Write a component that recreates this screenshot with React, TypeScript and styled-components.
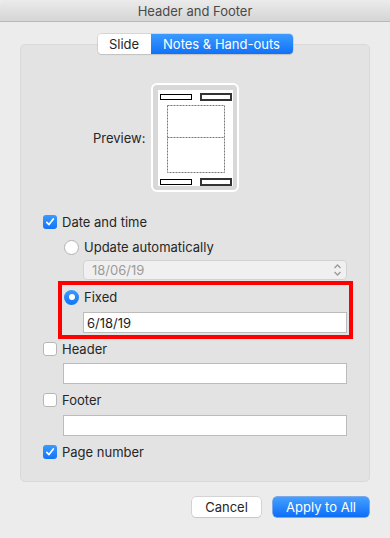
import styled, { createGlobalStyle } from "styled-components";

const GlobalStyle = createGlobalStyle`
    html, body {
        margin: 0;
        padding: 0;
        background: #ececec;
    }
    body {
        font-family: Inter, "Noto Sans", "Liberation Sans", sans-serif;
        font-size: 13px;
        color: #262626;
    }
`;

const Window = styled.div`
    width: 390px;
    height: 538px;
    background: #ececec;
    display: flex;
    flex-direction: column;
    overflow: hidden;
    border-radius: 5px;
`;

const TitleBar = styled.div`
    height: 21px;
    flex: none;
    display: flex;
    align-items: center;
    justify-content: center;
    background: linear-gradient(#ebebeb, #d5d5d5);
    border-bottom: 1px solid #b9b9b9;
    color: #4a4a4a;
    font-size: 13px;
`;

const Tabs = styled.div`
    display: flex;
    align-self: center;
    margin-top: 12px;
    height: 20px;
    position: relative;
    z-index: 1;
    border-radius: 4px;
    box-shadow: 0 0 0 0.5px #bdbdbd, 0 1px 1px rgba(0, 0, 0, 0.12);
    overflow: hidden;
`;

const Tab = styled.div<{ $active?: boolean }>`
    display: flex;
    align-items: center;
    justify-content: center;
    width: ${(p) => (p.$active ? "142px" : "53px")};
    background: ${(p) =>
        p.$active ? "linear-gradient(#3c9bff, #0f72f8)" : "#fff"};
    color: ${(p) => (p.$active ? "#fff" : "#262626")};
`;

const Group = styled.div`
    margin: -10px 20px 0;
    height: 438px;
    box-sizing: border-box;
    background: #e3e3e3;
    border: 1px solid #d9d9d9;
    border-radius: 5px;
    padding: 38px 22px 0 22px;
    display: flex;
    flex-direction: column;
`;

const PreviewRow = styled.div`
    display: flex;
    align-items: center;
    margin-left: 50px;
    gap: 6px;
`;

const PreviewLabel = styled.span`
    width: 52px;
    text-align: right;
`;

const PreviewFrame = styled.div`
    width: 84px;
    height: 105px;
    border: 2px solid #fff;
    border-radius: 6px;
    background: #d8d8d8;
    display: flex;
    align-items: center;
    justify-content: center;
`;

const Page = styled.svg`
    display: block;
    background: #fff;
`;

const Row = styled.label<{ $indent?: number; $top?: number }>`
    display: flex;
    align-items: center;
    gap: 5px;
    height: 18px;
    margin-left: ${(p) => p.$indent ?? 0}px;
    margin-top: ${(p) => p.$top ?? 0}px;
`;

const Check = styled.span<{ $on?: boolean }>`
    width: 14px;
    height: 14px;
    box-sizing: border-box;
    border-radius: 3px;
    flex: none;
    display: flex;
    align-items: center;
    justify-content: center;
    background: ${(p) => (p.$on ? "linear-gradient(#3b9aff, #1275f9)" : "#fff")};
    border: ${(p) => (p.$on ? "none" : "1px solid #b7b7b7")};
`;

const Radio = styled.span<{ $on?: boolean }>`
    width: 15px;
    height: 15px;
    box-sizing: border-box;
    border-radius: 50%;
    flex: none;
    display: flex;
    align-items: center;
    justify-content: center;
    background: ${(p) => (p.$on ? "linear-gradient(#3b9aff, #1275f9)" : "#fff")};
    border: ${(p) => (p.$on ? "none" : "1px solid #b2b2b2")};

    &::after {
        content: "";
        display: ${(p) => (p.$on ? "block" : "none")};
        width: 6px;
        height: 6px;
        border-radius: 50%;
        background: #fff;
    }
`;

const Combo = styled.div`
    margin: 4px 0 0 40px;
    height: 20px;
    box-sizing: border-box;
    border: 1px solid #d2d2d2;
    border-radius: 4px;
    background: #f0f0f0;
    color: #9b9b9b;
    display: flex;
    align-items: center;
    justify-content: space-between;
    padding: 0 4px 0 8px;
`;

const Highlight = styled.div`
    margin: 1px -6px 0 15px;
    border: 4px solid #ff0000;
    padding: 3px 2px 2px 2px;
    display: flex;
    flex-direction: column;
`;

const Field = styled.div<{ $indent?: number; $top?: number }>`
    height: 21px;
    box-sizing: border-box;
    margin-left: ${(p) => p.$indent ?? 0}px;
    margin-top: ${(p) => p.$top ?? 0}px;
    background: #fff;
    border: 1px solid #bcbcbc;
    display: flex;
    align-items: center;
    padding-left: 3px;
    color: #1e1e1e;
`;

const Footer = styled.div`
    display: flex;
    justify-content: flex-end;
    gap: 12px;
    padding: 15px 21px 0 0;
`;

const Button = styled.div<{ $primary?: boolean }>`
    height: 20px;
    width: ${(p) => (p.$primary ? "96px" : "69px")};
    box-sizing: border-box;
    border-radius: 4px;
    display: flex;
    align-items: center;
    justify-content: center;
    background: ${(p) =>
        p.$primary ? "linear-gradient(#45a0ff, #0c6ef7)" : "#fff"};
    color: ${(p) => (p.$primary ? "#fff" : "#262626")};
    box-shadow: ${(p) =>
        p.$primary
            ? "0 0 0 0.5px #1066e0"
            : "0 0 0 0.5px #bcbcbc, 0 1px 1px rgba(0,0,0,0.1)"};
`;

const Tick = () => (
    <svg width='10' height='10' viewBox='0 0 10 10'>
        <path
            d='M1.8 5.3 L4 7.6 L8.3 2'
            fill='none'
            stroke='#fff'
            strokeWidth='1.7'
            strokeLinecap='round'
            strokeLinejoin='round'
        />
    </svg>
);

const Stepper = () => (
    <svg width='9' height='14' viewBox='0 0 9 14'>
        <path
            d='M1.5 5 L4.5 2 L7.5 5 M1.5 9 L4.5 12 L7.5 9'
            fill='none'
            stroke='#9a9a9a'
            strokeWidth='1.3'
        />
    </svg>
);

// thumbnail of the handout page: header/footer boxes and two slide areas
const PagePreview = () => (
    <Page width='75' height='96' viewBox='0 0 75 96'>
        <rect x='2.5' y='4.5' width='31' height='5' fill='#fff' stroke='#000' />
        <rect x='43' y='4' width='30' height='6' fill='#fff' stroke='#333' strokeWidth='2' />
        <rect
            x='9.5'
            y='15.5'
            width='57'
            height='67'
            fill='none'
            stroke='#777'
            strokeDasharray='2 1'
        />
        <line x1='9.5' y1='47.5' x2='66.5' y2='47.5' stroke='#777' strokeDasharray='2 1' />
        <rect x='2.5' y='89.5' width='31' height='5' fill='#fff' stroke='#000' />
        <rect x='43' y='89' width='30' height='6' fill='#fff' stroke='#333' strokeWidth='2' />
    </Page>
);

const App = () => {
    return (
        <Window>
            <GlobalStyle />
            <TitleBar>Header and Footer</TitleBar>

            <Tabs>
                <Tab>Slide</Tab>
                <Tab $active>Notes &amp; Hand-outs</Tab>
            </Tabs>

            <Group>
                <PreviewRow>
                    <PreviewLabel>Preview:</PreviewLabel>
                    <PreviewFrame>
                        <PagePreview />
                    </PreviewFrame>
                </PreviewRow>

                <Row $top={21}>
                    <Check $on>
                        <Tick />
                    </Check>
                    Date and time
                </Row>
                <Row $indent={21} $top={7}>
                    <Radio />
                    Update automatically
                </Row>
                <Combo>
                    18/06/19
                    <Stepper />
                </Combo>

                <Highlight>
                    <Row>
                        <Radio $on />
                        Fixed
                    </Row>
                    <Field $indent={19} $top={6}>
                        6/18/19
                    </Field>
                </Highlight>

                <Row $top={1}>
                    <Check />
                    Header
                </Row>
                <Field $indent={20} $top={5} />

                <Row $top={7}>
                    <Check />
                    Footer
                </Row>
                <Field $indent={20} $top={6} />

                <Row $top={7}>
                    <Check $on>
                        <Tick />
                    </Check>
                    Page number
                </Row>
            </Group>

            <Footer>
                <Button>Cancel</Button>
                <Button $primary>Apply to All</Button>
            </Footer>
        </Window>
    );
};

export default App;
